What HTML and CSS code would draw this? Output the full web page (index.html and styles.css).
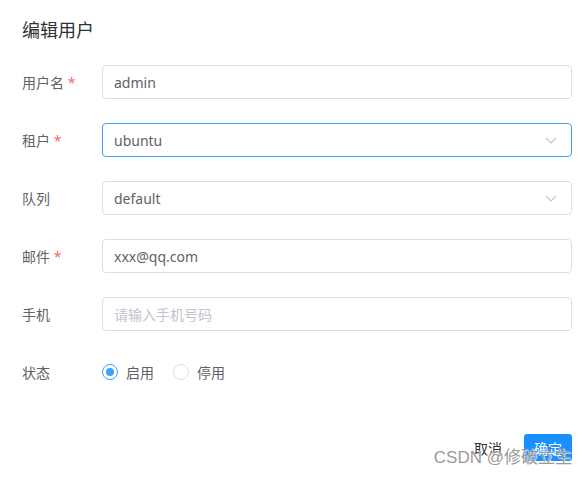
FILE: index.html
```html
<!DOCTYPE html>
<html lang="zh">
<head>
<meta charset="utf-8">
<link rel="stylesheet" href="styles.css">
</head>
<body>
<div class="dialog">
  <div class="title">编辑用户</div>
  <div class="form">
    <div class="row">
      <div class="label">用户名 <span class="req">*</span></div>
      <div class="input"><span class="val">admin</span></div>
    </div>
    <div class="row">
      <div class="label">租户 <span class="req">*</span></div>
      <div class="input focus"><span class="val">ubuntu</span>
        <svg class="arrow" width="12" height="7" viewBox="0 0 12 7"><path d="M1 1 L6 6 L11 1" fill="none" stroke="#c0c4cc" stroke-width="1.1"/></svg>
      </div>
    </div>
    <div class="row">
      <div class="label">队列</div>
      <div class="input"><span class="val">default</span>
        <svg class="arrow" width="12" height="7" viewBox="0 0 12 7"><path d="M1 1 L6 6 L11 1" fill="none" stroke="#c0c4cc" stroke-width="1.1"/></svg>
      </div>
    </div>
    <div class="row">
      <div class="label">邮件 <span class="req">*</span></div>
      <div class="input"><span class="val">xxx@qq.com</span></div>
    </div>
    <div class="row">
      <div class="label">手机</div>
      <div class="input"><span class="ph">请输入手机号码</span></div>
    </div>
    <div class="row">
      <div class="label">状态</div>
      <div class="radios">
        <span class="radio checked"><span class="dot"></span></span><span class="rtext">启用</span>
        <span class="radio"></span><span class="rtext">停用</span>
      </div>
    </div>
  </div>
  <div class="footer">
    <span class="cancel">取消</span>
    <span class="ok">确定</span>
  </div>
  <div class="watermark">CSDN @修破立生</div>
</div>
</body>
</html>
```

FILE: styles.css
```css
html, body {
  margin: 0;
  padding: 0;
  background: #fff;
}
body {
  font-family: "Noto Sans", "Noto Sans CJK SC", sans-serif;
  width: 587px;
  height: 477px;
  overflow: hidden;
}
.dialog {
  position: relative;
  height: 477px;
  padding: 18px 15px 0 22px;
  box-sizing: border-box;
}
.title {
  font-size: 18px;
  line-height: 24px;
  color: #303133;
  height: 24px;
}
.form {
  margin-top: 23px;
  display: flex;
  flex-direction: column;
  gap: 24px;
}
.row {
  display: flex;
  align-items: center;
  height: 34px;
}
.label {
  width: 80px;
  flex: none;
  font-size: 14px;
  color: #606266;
}
.req {
  color: #f56c6c;
}
.input {
  flex: 1;
  height: 34px;
  box-sizing: border-box;
  border: 1px solid #dcdfe6;
  border-radius: 4px;
  display: flex;
  align-items: center;
  padding: 0 14px 0 11px;
  font-size: 14px;
  color: #606266;
}
.input.focus {
  border-color: #409eff;
}
.val {
  flex: 1;
}
.ph {
  flex: 1;
  color: #c0c4cc;
}
.arrow {
  flex: none;
}
.radios {
  display: flex;
  align-items: center;
  font-size: 14px;
  color: #606266;
}
.radio {
  width: 16px;
  height: 16px;
  box-sizing: border-box;
  border: 1px solid #dcdfe6;
  border-radius: 50%;
  display: flex;
  align-items: center;
  justify-content: center;
  margin-right: 8px;
}
.radio.checked {
  border: 1.5px solid #409eff;
}
.dot {
  width: 8px;
  height: 8px;
  border-radius: 50%;
  background: #409eff;
}
.rtext {
  margin-right: 19px;
}
.footer {
  margin-top: 45px;
  display: flex;
  justify-content: flex-end;
  align-items: center;
  gap: 22px;
}
.cancel {
  font-size: 14px;
  color: #303133;
}
.ok {
  width: 48px;
  height: 27px;
  border-radius: 3px;
  background: #1890ff;
  color: #fff;
  font-size: 14px;
  display: flex;
  align-items: center;
  justify-content: center;
}
.watermark {
  position: absolute;
  right: 15px;
  top: 447px;
  font-family: "Liberation Sans", "Noto Sans CJK SC", sans-serif;
  font-size: 17px;
  line-height: 22px;
  color: #9a9a9a;
  text-shadow: 0 0 1px #fff, 1px 1px 0 rgba(255,255,255,0.6);
}
```
